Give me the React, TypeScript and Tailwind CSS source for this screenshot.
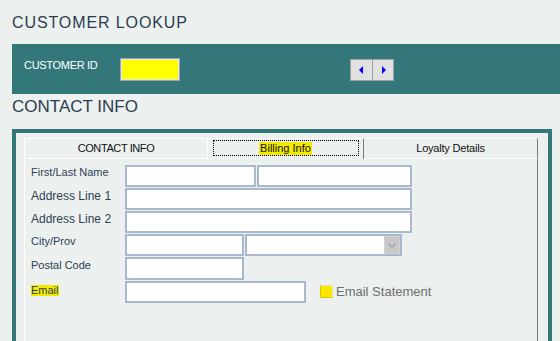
import React from "react";

const inputCls = "h-[22px] border-2 border-[#a8b9ce] bg-white";

function Label({ children, size = "text-[11px]", mt = "mt-[1px]" }: { children: React.ReactNode; size?: string; mt?: string }) {
  return <div className={`w-[94px] shrink-0 ${size} ${mt} leading-none text-[#2e4153]`}>{children}</div>;
}

function Arrow({ dir }: { dir: "left" | "right" }) {
  return (
    <svg width="5" height="8" viewBox="0 0 5 8">
      {dir === "left" ? <path d="M4 0 L0 4 L4 8 Z" fill="#0000ff" /> : <path d="M1 0 L5 4 L1 8 Z" fill="#0000ff" />}
    </svg>
  );
}

export default function App() {
  return (
    <div className="flex h-[341px] w-[560px] flex-col overflow-hidden bg-[#ecf0ef] font-['Liberation_Sans',Arial,sans-serif]">
      <div className="h-[44px] shrink-0 pl-[12px] pt-[15px]">
        <h1 className="text-[16px] leading-none tracking-[0.9px] text-[#2b3e50]">CUSTOMER LOOKUP</h1>
      </div>

      {/* customer id bar */}
      <div className="ml-[12px] flex h-[50px] shrink-0 items-start bg-[#33777a] pt-[14px]">
        <span className="ml-[12px] mt-[2px] w-[96px] text-[11px] leading-none tracking-[-0.3px] text-white">CUSTOMER ID</span>
        <div className="h-[23px] w-[60px] border border-[#a3a3a3] bg-[#ffff00] shadow-[inset_0_0_0_1px_#e8e8e8]" />
        <div className="ml-[170px] mt-[1px] flex h-[22px] border border-[#a0a0a0] bg-[#e1e1e1]">
          <button className="flex w-[21px] items-center justify-center">
            <Arrow dir="left" />
          </button>
          <button className="flex w-[21px] items-center justify-center border-l border-[#a0a0a0]">
            <Arrow dir="right" />
          </button>
        </div>
      </div>

      <div className="h-[35px] shrink-0 pl-[12px] pt-[4px]">
        <h2 className="text-[17px] leading-none tracking-[0px] text-[#2b3e50]">CONTACT INFO</h2>
      </div>

      {/* contact panel */}
      <div className="ml-[12px] h-[260px] w-[540px] shrink-0 border-4 border-[#33777a] pl-[8px] pr-[10px] pt-[5px]">
        <div className="flex h-[21px] text-[11px] leading-none text-[#111]">
          <div className="flex w-[183px] items-center justify-center border-l border-t border-b border-white tracking-[-0.4px]">
            CONTACT INFO
          </div>
          <div className="relative flex w-[157px] items-center justify-center border-l border-t border-r border-l-white border-t-white border-r-[#7a7a7a]">
            <div className="absolute left-[5px] right-[4px] top-[1px] bottom-[3px] border border-dotted border-black" />
            <span className="relative -mt-[1px] bg-[#f2ea00] px-[1px] py-[1px]">Billing Info</span>
          </div>
          <div className="flex w-[174px] items-center justify-center border-t border-b border-r border-t-white border-b-white border-r-[#7a7a7a] tracking-[-0.2px]">
            Loyalty Details
          </div>
        </div>

        <div className="flex h-[200px] flex-col gap-[1px] border-l border-r border-l-white border-r-[#7a7a7a] pl-[6px] pt-[6px]">
          <div className="flex items-start">
            <Label mt="mt-[2px]">First/Last Name</Label>
            <div className={`${inputCls} w-[131px]`} />
            <div className={`${inputCls} ml-[1px] w-[155px]`} />
          </div>
          <div className="flex items-start">
            <Label size="text-[12px]" mt="mt-[2px]">Address Line 1</Label>
            <div className={`${inputCls} w-[287px]`} />
          </div>
          <div className="flex items-start">
            <Label size="text-[12px]" mt="mt-[2px]">Address Line 2</Label>
            <div className={`${inputCls} w-[287px]`} />
          </div>
          <div className="flex items-start">
            <Label mt="mt-[2px]">City/Prov</Label>
            <div className={`${inputCls} w-[119px]`} />
            <div className={`${inputCls} ml-[1px] flex w-[157px] justify-end p-[0px]`}>
              <div className="flex w-[16px] items-center justify-center border border-[#d6d6d6] bg-[#c8c8c8]">
                <svg width="8" height="5" viewBox="0 0 8 5">
                  <path d="M0.5 0.5 L4 4 L7.5 0.5" fill="none" stroke="#8a8a8a" strokeWidth="1" />
                </svg>
              </div>
            </div>
          </div>
          <div className="flex items-start">
            <Label mt="mt-[3px]">Postal Code</Label>
            <div className={`${inputCls} h-[23px] w-[119px]`} />
          </div>
          <div className="flex items-start">
            <div className="flex w-[94px] shrink-0 pt-[4px] leading-none">
              <span className="block bg-[#f2ea00] text-[11px] leading-[11px] text-[#2e4153]">Email</span>
            </div>
            <div className={`${inputCls} w-[181px]`} />
            <div className="ml-[14px] mt-[4px] flex items-center gap-[3px]">
              <div className="h-[13px] w-[13px] border border-[#d8c800] border-t-[#e6e6b0] border-r-[#e6e6b0] bg-[#ffe600]" />
              <span className="text-[13px] leading-none text-[#6e6e6e]">Email Statement</span>
            </div>
          </div>
        </div>
      </div>
    </div>
  );
}
